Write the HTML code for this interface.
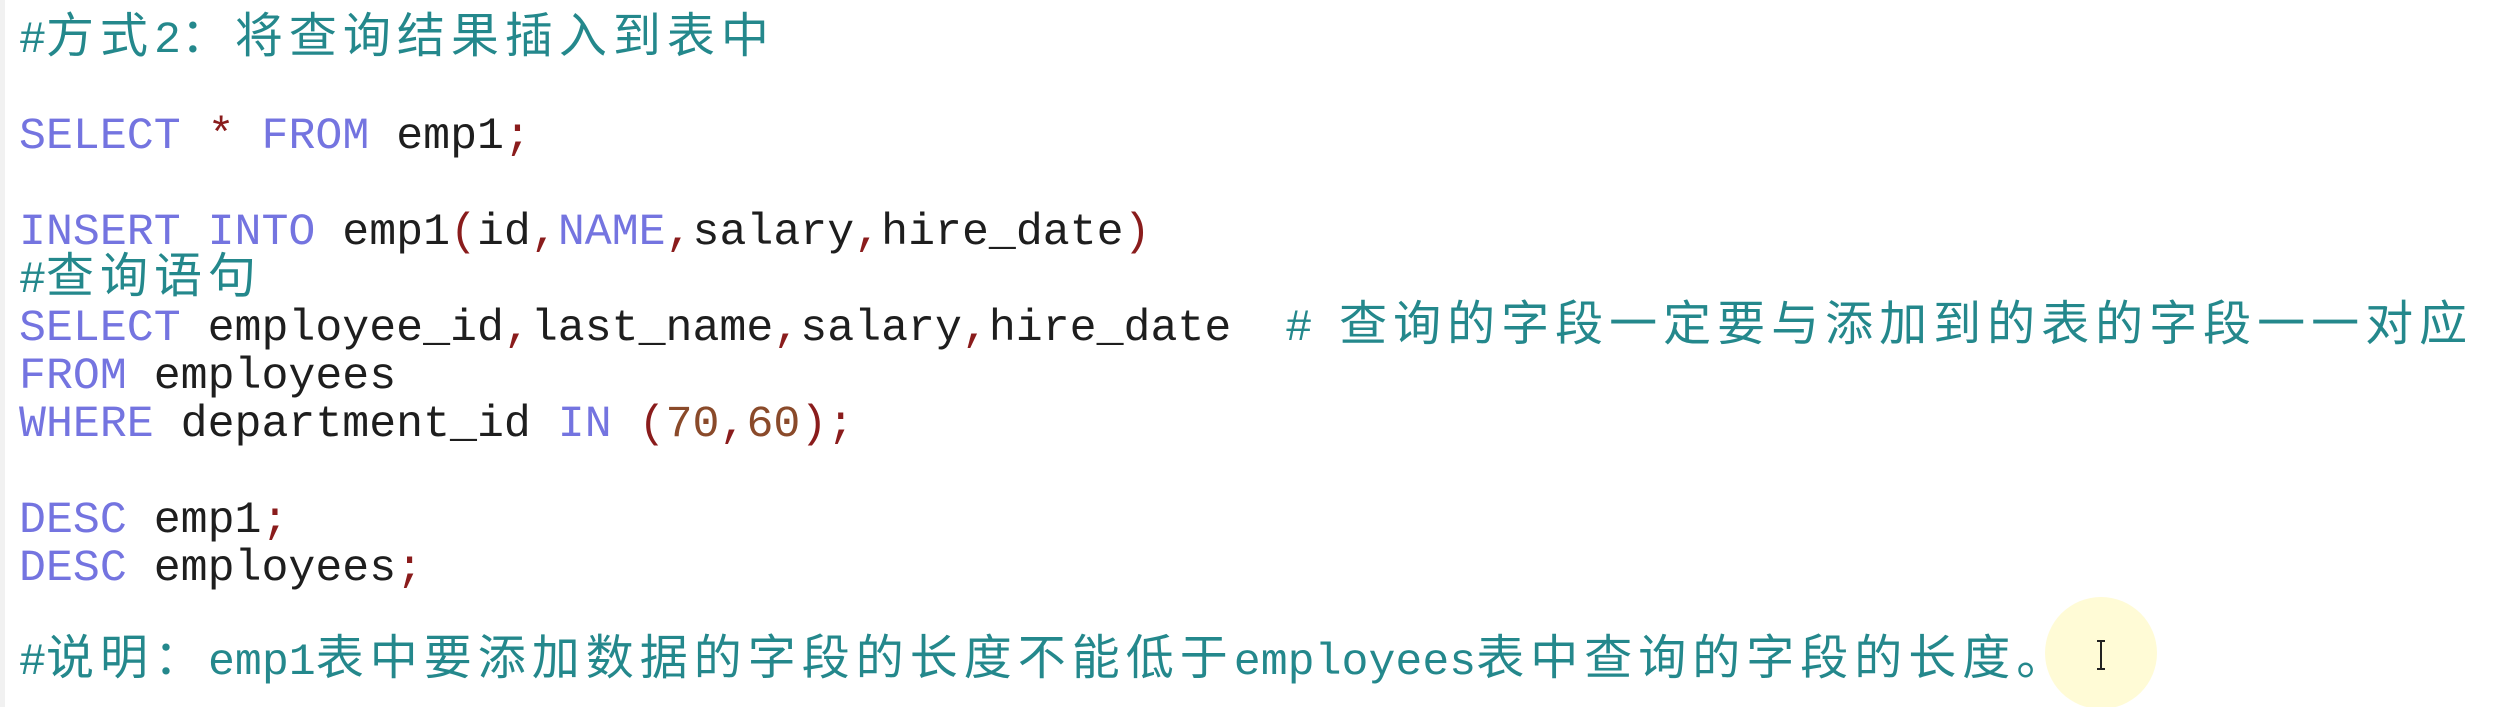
<!DOCTYPE html>
<html><head><meta charset="utf-8"><style>
html,body{margin:0;padding:0;background:#fff;width:2511px;height:707px;overflow:hidden;position:relative}
.l{position:absolute;left:19px;height:48px;line-height:48px;white-space:pre;font-family:"Liberation Mono","Noto Sans CJK SC",monospace;font-size:44.9px;color:#1e1e1e}
.k{color:#7474e0}
.p{color:#8a1c1c}
.n{color:#8a4a2a}
.c{color:#24888c}
.z{font-family:"Noto Sans CJK SC","WenQuanYi Zen Hei",sans-serif;font-size:48px;letter-spacing:6px;line-height:0}
.bar{position:absolute;left:0;top:0;width:5px;height:707px;background:#f1f1f1}
.hl{position:absolute;left:2045px;top:597px;width:112px;height:112px;border-radius:50%;background:#fffbd6}
.cur{position:absolute;left:2100px;top:640px;width:2px;height:30px;background:#222}
.cur:before,.cur:after{content:"";position:absolute;left:-3px;width:8px;height:2px;background:#222}
.cur:before{top:0}.cur:after{bottom:0}
</style></head><body>
<div class="bar"></div>
<div class="hl"></div>
<div class="cur"></div>
<div class="l c" style="top:17px">#<span class="z">方式</span>2<span class="z">：将查询结果插入到表中</span></div>
<div class="l" style="top:113px"><span class="k">SELECT</span> <span class="p">*</span> <span class="k">FROM</span> emp1<span class="p">;</span></div>
<div class="l" style="top:209px"><span class="k">INSERT INTO</span> emp1<span class="p">(</span>id<span class="p">,</span><span class="k">NAME</span><span class="p">,</span>salary<span class="p">,</span>hire_date<span class="p">)</span></div>
<div class="l c" style="top:257px">#<span class="z">查询语句</span></div>
<div class="l" style="top:305px"><span class="k">SELECT</span> employee_id<span class="p">,</span>last_name<span class="p">,</span>salary<span class="p">,</span>hire_date  <span class="c"># <span class="z">查询的字段一定要与添加到的表的字段一一对应</span></span></div>
<div class="l" style="top:353px"><span class="k">FROM</span> employees</div>
<div class="l" style="top:401px"><span class="k">WHERE</span> department_id <span class="k">IN</span> <span class="p">(</span><span class="n">70</span><span class="p">,</span><span class="n">60</span><span class="p">);</span></div>
<div class="l" style="top:497px"><span class="k">DESC</span> emp1<span class="p">;</span></div>
<div class="l" style="top:545px"><span class="k">DESC</span> employees<span class="p">;</span></div>
<div class="l c" style="top:639px">#<span class="z">说明：</span>emp1<span class="z">表中要添加数据的字段的长度不能低于</span>employees<span class="z">表中查询的字段的长度。</span></div>
</body></html>
